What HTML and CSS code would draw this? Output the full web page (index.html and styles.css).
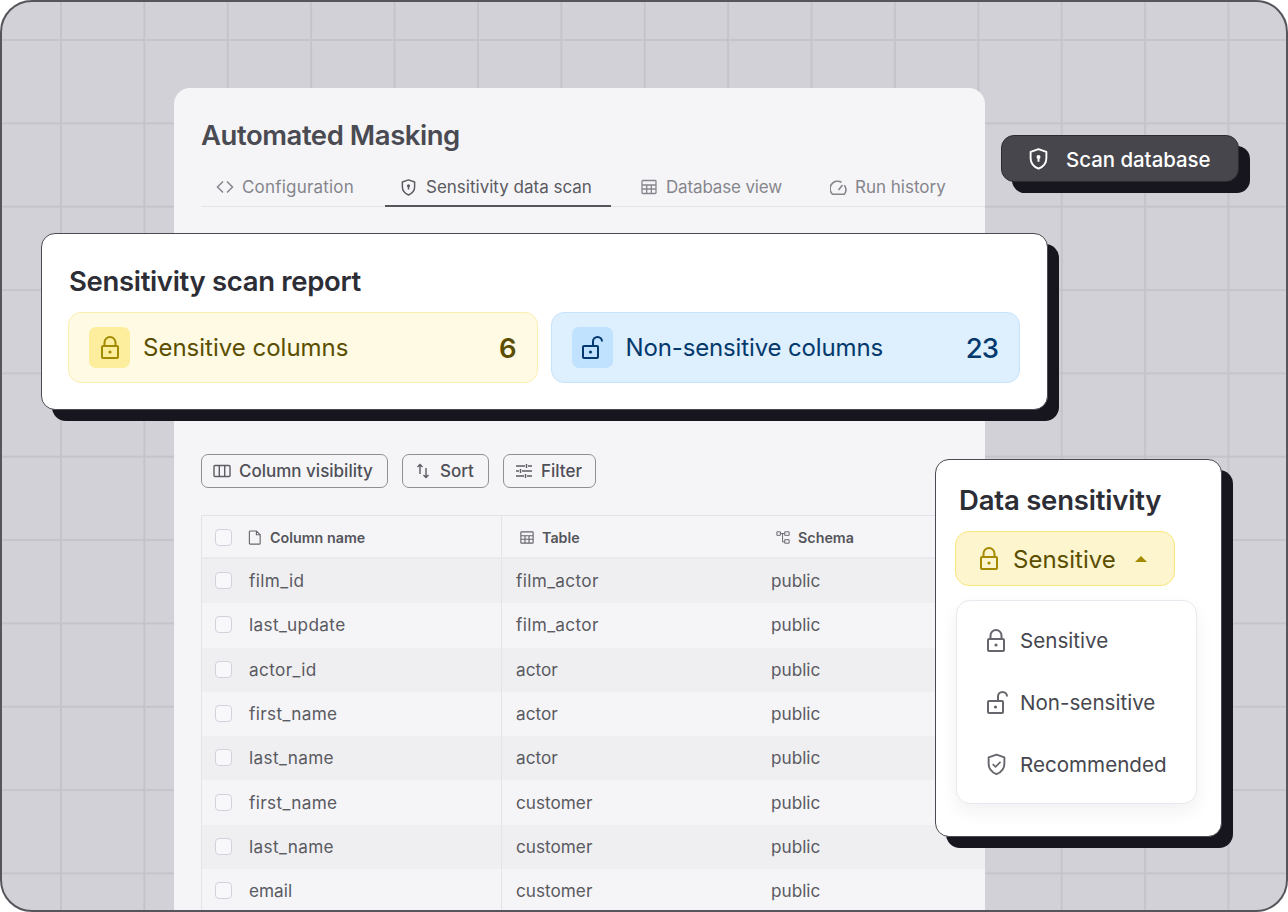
FILE: index.html
```html
<!DOCTYPE html>
<html lang="en">
<head>
<meta charset="utf-8">
<title>Automated Masking</title>
<link rel="stylesheet" href="styles.css">
</head>
<body>
<svg class="defs" width="0" height="0" aria-hidden="true">
  <symbol id="lock" viewBox="0 0 18 23"><path d="M2 10h14a1 1 0 0 1 1 1v10a1 1 0 0 1-1 1H2a1 1 0 0 1-1-1V11a1 1 0 0 1 1-1zM3.500 10V6.500a5.500 5.500 0 0 1 11 0V10" fill="none" stroke="currentColor" stroke-width="2"/><circle cx="9" cy="16" r="1.600" fill="currentColor"/></symbol>
  <symbol id="unlock" viewBox="0 0 21 23"><path d="M2 10h13a1 1 0 0 1 1 1v10a1 1 0 0 1-1 1H2a1 1 0 0 1-1-1V11a1 1 0 0 1 1-1zM11 10V5.500a4.500 4.500 0 0 1 9 0" fill="none" stroke="currentColor" stroke-width="2"/><circle cx="8.500" cy="16" r="1.600" fill="currentColor"/></symbol>
  <symbol id="shield" viewBox="0 0 20 23"><path d="M10 1.200l8.300 2.800v6.600c0 5-3.400 9-8.300 11.100-4.900-2.100-8.300-6.100-8.300-11.100V4z" fill="none" stroke="currentColor" stroke-width="2" stroke-linejoin="round"/><circle cx="10" cy="9.300" r="2.100" fill="currentColor"/><path d="M10 9.300v5" stroke="currentColor" stroke-width="2"/></symbol>
  <symbol id="shieldcheck" viewBox="0 0 20 23"><path d="M10 1.200l8.300 2.800v6.600c0 5-3.400 9-8.300 11.100-4.900-2.100-8.300-6.100-8.300-11.100V4z" fill="none" stroke="currentColor" stroke-width="2" stroke-linejoin="round"/><path d="M6 11l3 3 5.200-5.200" fill="none" stroke="currentColor" stroke-width="1.800"/></symbol>
  <symbol id="grid" viewBox="0 0 16 16"><path d="M1.800 1.500h12.400a.8.8 0 0 1 .8.800v11.400a.8.8 0 0 1-.8.800H1.800a.8.8 0 0 1-.8-.8V2.300a.8.8 0 0 1 .8-.8zM1 6h14M1 10h14M5.700 6v8.500M10.300 6v8.500" fill="none" stroke="currentColor" stroke-width="1.300"/></symbol>
</svg>

<main class="frame">
  <section class="panel">
    <h1 class="panel-title">Automated Masking</h1>
    <nav class="tabs">
      <div class="tab tab-config">
        <svg class="ico ico-tab" viewBox="0 0 18 18"><path d="M7 3.500L1.500 9 7 14.500M11 3.500L16.500 9 11 14.500" fill="none" stroke="currentColor" stroke-width="1.500"/></svg>
        <span>Configuration</span>
      </div>
      <div class="tab tab-scan tab-active">
        <svg class="ico ico-shield-s"><use href="#shield"/></svg>
        <span>Sensitivity data scan</span>
      </div>
      <div class="tab tab-db">
        <svg class="ico ico-grid"><use href="#grid"/></svg>
        <span>Database view</span>
      </div>
      <div class="tab tab-run">
        <svg class="ico ico-gauge" viewBox="0 0 17 17"><path d="M2.600 15.300A7.500 7.500 0 0 1 11.500 3.300M14.300 6.200a7.500 7.500 0 0 1 0 9.100H2.600M8.500 11l4-5" fill="none" stroke="currentColor" stroke-width="1.600"/></svg>
        <span>Run history</span>
      </div>
    </nav>

    <div class="toolbar">
      <div class="tool tool-col">
        <svg class="ico ico-tool" viewBox="0 0 18 18"><path d="M2 3.500h14a1 1 0 0 1 1 1v9a1 1 0 0 1-1 1H2a1 1 0 0 1-1-1v-9a1 1 0 0 1 1-1zM6.300 3.500v11M11.700 3.500v11" fill="none" stroke="currentColor" stroke-width="1.400"/></svg>
        <span>Column visibility</span>
      </div>
      <div class="tool tool-sort">
        <svg class="ico ico-tool" viewBox="0 0 18 18"><path d="M6 12V2.500M3.500 5L6 2.500 8.500 5M12 6v9.500M9.500 13l2.500 2.500 2.500-2.500" fill="none" stroke="currentColor" stroke-width="1.400"/></svg>
        <span>Sort</span>
      </div>
      <div class="tool tool-filter">
        <svg class="ico ico-tool" viewBox="0 0 18 18"><path d="M1 4h9M13 4h4M1 9h3M7 9h10M1 14h8M12 14h5M11.500 2v4M5.500 7v4M10.500 12v4" fill="none" stroke="currentColor" stroke-width="1.400"/></svg>
        <span>Filter</span>
      </div>
    </div>

    <div class="table">
      <div class="row row-head">
        <div class="cell cell-name"><span class="check"></span>
          <svg class="ico ico-th" viewBox="0 0 14 16"><path d="M2 1h6.500L12.500 5v9a1 1 0 0 1-1 1H2a1 1 0 0 1-1-1V2a1 1 0 0 1 1-1zM8.500 1v4h4" fill="none" stroke="currentColor" stroke-width="1.200"/></svg>
          <span class="th-name">Column name</span></div>
        <div class="cell cell-table"><svg class="ico ico-th"><use href="#grid"/></svg><span>Table</span></div>
        <div class="cell cell-schema"><svg class="ico ico-th" viewBox="0 0 16 16"><path d="M1 1.500h4v4H1zM10 1.500h5v4h-5zM10 10.500h5v4h-5zM5 3.500h5M7.500 3.500v9.500H10" fill="none" stroke="currentColor" stroke-width="1.100"/></svg><span>Schema</span></div>
      </div>
      <div class="row row-alt"><div class="cell cell-name"><span class="check"></span><span class="snake">film_id</span></div><div class="cell cell-table"><span class="snake">film_actor</span></div><div class="cell cell-schema">public</div></div>
      <div class="row"><div class="cell cell-name"><span class="check"></span><span class="snake">last_update</span></div><div class="cell cell-table"><span class="snake">film_actor</span></div><div class="cell cell-schema">public</div></div>
      <div class="row row-alt"><div class="cell cell-name"><span class="check"></span><span class="snake">actor_id</span></div><div class="cell cell-table">actor</div><div class="cell cell-schema">public</div></div>
      <div class="row"><div class="cell cell-name"><span class="check"></span><span class="snake">first_name</span></div><div class="cell cell-table">actor</div><div class="cell cell-schema">public</div></div>
      <div class="row row-alt"><div class="cell cell-name"><span class="check"></span><span class="snake">last_name</span></div><div class="cell cell-table">actor</div><div class="cell cell-schema">public</div></div>
      <div class="row"><div class="cell cell-name"><span class="check"></span><span class="snake">first_name</span></div><div class="cell cell-table">customer</div><div class="cell cell-schema">public</div></div>
      <div class="row row-alt"><div class="cell cell-name"><span class="check"></span><span class="snake">last_name</span></div><div class="cell cell-table">customer</div><div class="cell cell-schema">public</div></div>
      <div class="row"><div class="cell cell-name"><span class="check"></span><span>email</span></div><div class="cell cell-table">customer</div><div class="cell cell-schema">public</div></div>
    </div>
  </section>

  <div class="scan-btn">
    <svg class="ico ico-scan"><use href="#shield"/></svg>
    <span>Scan database</span>
  </div>

  <section class="report">
    <h2 class="card-title report-title">Sensitivity scan report</h2>
    <div class="stats">
      <div class="stat stat-y">
        <span class="stat-icon"><svg class="ico ico-lock"><use href="#lock"/></svg></span>
        <span class="stat-label">Sensitive columns</span>
        <span class="stat-num">6</span>
      </div>
      <div class="stat stat-b">
        <span class="stat-icon"><svg class="ico ico-lock-u"><use href="#unlock"/></svg></span>
        <span class="stat-label">Non-sensitive columns</span>
        <span class="stat-num">23</span>
      </div>
    </div>
  </section>

  <section class="sens">
    <h2 class="card-title">Data sensitivity</h2>
    <div class="select">
      <svg class="ico ico-lock"><use href="#lock"/></svg>
      <span class="select-label">Sensitive</span>
      <span class="caret"></span>
    </div>
    <div class="menu">
      <div class="menu-item"><svg class="ico ico-menu"><use href="#lock"/></svg><span>Sensitive</span></div>
      <div class="menu-item"><svg class="ico ico-menu ico-menu-wide"><use href="#unlock"/></svg><span>Non-sensitive</span></div>
      <div class="menu-item"><svg class="ico ico-menu ico-menu-check"><use href="#shieldcheck"/></svg><span>Recommended</span></div>
    </div>
  </section>
</main>
</body>
</html>
```

FILE: styles.css
```css
* { box-sizing: border-box; }
html, body { margin: 0; padding: 0; }
body { width: 1288px; height: 912px; overflow: hidden; background: #fff; font-family: Inter, "Noto Sans", sans-serif; }
.defs { position: absolute; }
.ico { display: block; flex: none; }

.frame {
  position: relative;
  width: 1288px;
  height: 912px;
  padding: 86px 0 0 172px;
  border: 2px solid #55555c;
  border-radius: 32px;
  overflow: hidden;
  background-color: #d2d1d7;
  background-image:
    linear-gradient(to right, #c5c4cb 2px, transparent 2px),
    linear-gradient(to bottom, #c5c4cb 2px, transparent 2px);
  background-size: 83.4px 83.35px;
  background-position: 58px 37px;
}

.panel {
  width: 811px;
  height: 830px;
  padding: 29px 0 0 27px;
  background: #f5f5f8;
  border-radius: 16px 16px 0 0;
  overflow: hidden;
}
.panel-title { margin: 0; font-size: 27.500px; line-height: 36px; font-weight: 600; color: #4a4a52; letter-spacing: -0.45px; }

.tabs { display: flex; margin-top: 16px; height: 38px; border-bottom: 1px solid #e3e3ea; }
.tab { display: flex; align-items: center; gap: 8px; height: 38px; padding-bottom: 2px; font-size: 17px; color: #85858c; }
.tab-config { width: 184px; padding-left: 15px; letter-spacing: 0.2px; }
.tab-scan { width: 226px; padding-left: 16px; padding-bottom: 0; gap: 10px; border-bottom: 2px solid #55555c; color: #5a5a61; }
.tab-db { width: 219px; padding-left: 30px; gap: 9px; letter-spacing: -0.15px; }
.ico-tab { width: 18px; height: 18px; }
.ico-grid { width: 16px; height: 16px; }
.ico-gauge { width: 17px; height: 17px; }
.ico-shield-s { width: 15px; height: 17px; }

.toolbar { display: flex; gap: 14px; margin-top: 247px; }
.tool { display: flex; align-items: center; gap: 8px; height: 34px; padding: 0 0 1px 11px; border: 1px solid #8f8f95; border-radius: 7px; font-size: 17px; font-weight: 500; color: #4f4f57; }
.ico-tool { width: 18px; height: 18px; color: #5c5c63; }
.tool-col { width: 187px; }
.tool-sort { width: 87px; }
.tool-filter { width: 93px; }

.table { width: 784px; margin-top: 27px; border-top: 1px solid #e3e3ea; border-left: 1px solid #e3e3ea; }
.row { display: flex; height: 44.300px; padding-bottom: 0; font-size: 17.200px; color: #5a5a61; }
.row-head { height: 43px; border-bottom: 2px solid #eaeaee; font-size: 14.300px; font-weight: 600; color: #55555c; }
.row-alt { background: #efeff1; }
.cell { display: flex; align-items: center; padding-bottom: 1px; }
.row-head .cell { padding-bottom: 0; padding-top: 1px; }
.cell-name { width: 300px; padding-left: 13px; border-right: 1px solid #e3e3ea; }
.cell-name .check { margin-right: 17px; }
.row-head .cell-name .check { margin-right: 16px; }
.th-name { margin-left: 8px; }
.snake { letter-spacing: 0.35px; }
.cell-table { width: 269px; padding-left: 14px; }
.row-head .cell-table { padding-left: 18px; gap: 8px; }
.row-head .cell-schema { padding-left: 5px; gap: 8px; }
.ico-th { width: 14px; height: 15px; color: #66666d; }
.check { display: block; flex: none; width: 17px; height: 17px; border: 1px solid #d2d2dc; border-radius: 4px; background: #f8f8fa; }

.scan-btn {
  position: absolute; left: 999px; top: 133px;
  display: flex; align-items: center; gap: 18px;
  width: 238px; height: 47px; padding: 1px 0 0 27px;
  background: #47464c; border: 1px solid #2b2b31; border-radius: 13px;
  box-shadow: 11px 11px 0 #17161f;
  color: #fff; font-size: 20.400px; font-weight: 500;
}
.ico-scan { width: 19px; height: 22px; }

.report {
  position: absolute; left: 39px; top: 231px;
  width: 1007px; height: 177px; padding: 27px 27px 0 26px;
  background: #fff; border: 1px solid #4a4a52; border-radius: 14px;
  box-shadow: 11px 11px 0 #17161f;
}
.card-title { margin: 0; font-size: 27.500px; line-height: 40px; font-weight: 600; color: #2d2d36; letter-spacing: -0.2px; }
.report-title { padding-left: 1px; letter-spacing: -0.33px; }
.stats { display: flex; gap: 13px; margin-top: 11px; }
.stat { display: flex; align-items: center; height: 71px; flex: 1; padding: 0 21px 0 20px; border-radius: 13px; border: 1px solid; }
.stat-y { background: #fefae3; border-color: #fbefb0; color: #5b4e00; }
.stat-b { background: #deeffe; border-color: #c6e3fb; color: #03396c; }
.stat-icon { display: flex; align-items: center; justify-content: center; width: 41px; height: 41px; border-radius: 7px; margin-right: 13px; }
.stat-y .stat-icon { background: #fdee9d; }
.stat-b .stat-icon { background: #c0e2fe; }
.ico-lock { width: 18px; height: 23px; color: #a38a00; }
.ico-lock-u { width: 21px; height: 23px; color: #03396c; }
.stat-label { flex: 1; font-size: 24px; }
.stat-b .stat-label { letter-spacing: -0.14px; }
.stat-num { font-size: 27.500px; font-weight: 600; }
.stat-y .stat-num { margin-right: -1px; }
.stat-b .stat-num { font-weight: 500; letter-spacing: -1px; }

.sens {
  position: absolute; left: 933px; top: 457px;
  width: 287px; height: 378px; padding: 20px 0 0 19px;
  background: #fff; border: 1px solid #4a4a52; border-radius: 14px;
  box-shadow: 11px 11px 0 #17161f;
}
.sens .card-title { padding-left: 4px; }
.select { display: flex; align-items: center; width: 220px; height: 55px; margin-top: 11px; padding-left: 24px; background: #fdf5cd; border: 1px solid #fbe67e; border-radius: 14px; color: #5b4e00; font-size: 24px; }
.select-label { margin-left: 15px; padding-top: 2px; }
.caret { margin-left: 19px; width: 0; height: 0; border-left: 6px solid transparent; border-right: 6px solid transparent; border-bottom: 6px solid #a38a00; }
.menu { width: 241px; height: 204px; margin: 14px 0 0 1px; padding: 9px 0 0 30px; border: 1px solid #e8e8ee; border-radius: 14px; background: #fff; box-shadow: 0 8px 18px rgba(40, 40, 60, 0.06); }
.menu-item { display: flex; align-items: center; gap: 15px; height: 61.700px; font-size: 20.600px; color: #47474f; }
.ico-menu { width: 18px; height: 23px; color: #66666d; }
.ico-menu-wide { width: 21px; margin-right: -3px; }
.ico-menu-check { width: 19px; margin-right: -1px; }
```
